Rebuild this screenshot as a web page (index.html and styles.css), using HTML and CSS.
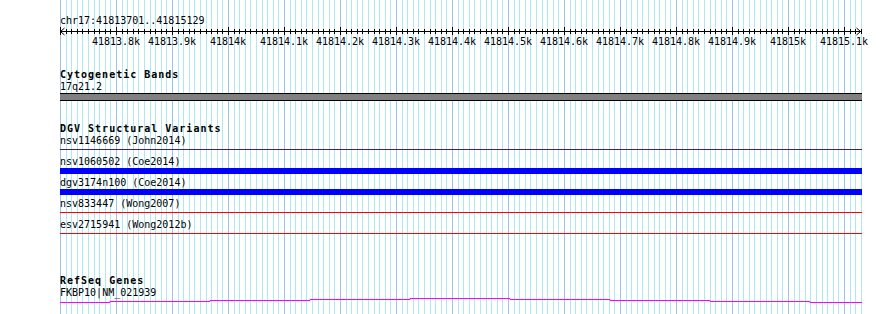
FILE: index.html
```html
<!DOCTYPE html>
<html lang="en">
<head>
<meta charset="utf-8">
<title>Genome browser</title>
<link rel="stylesheet" href="styles.css">
</head>
<body>
<div class="browser">
  <svg class="grid" id="grid" width="890" height="314" aria-hidden="true"></svg>
  <div class="tracks">
    <div class="ruler">
      <div class="loc">chr17:41813701..41815129</div>
      <svg class="ruler-svg" id="ruler" width="806" height="22"></svg>
    </div>

    <section class="track cyto">
      <h2 class="track-title">Cytogenetic Bands</h2>
      <div class="feat-label">17q21.2</div>
      <div class="band"></div>
    </section>

    <section class="track dgv">
      <h2 class="track-title">DGV Structural Variants</h2>
      <div class="feature">
        <div class="feat-label">nsv1146669 (John2014)</div>
        <div class="glyph"><div class="thin purple"></div></div>
      </div>
      <div class="feature">
        <div class="feat-label">nsv1060502 (Coe2014)</div>
        <div class="glyph solid"><div class="thick blue"></div></div>
      </div>
      <div class="feature">
        <div class="feat-label">dgv3174n100 (Coe2014)</div>
        <div class="glyph solid"><div class="thick blue"></div></div>
      </div>
      <div class="feature">
        <div class="feat-label">nsv833447 (Wong2007)</div>
        <div class="glyph"><div class="thin red"></div></div>
      </div>
      <div class="feature">
        <div class="feat-label">esv2715941 (Wong2012b)</div>
        <div class="glyph"><div class="thin red"></div></div>
      </div>
    </section>

    <section class="track refseq">
      <h2 class="track-title">RefSeq Genes</h2>
      <div class="feat-label">FKBP10|NM_021939</div>
      <svg class="gene" width="802" height="8" aria-hidden="true">
        <polyline points="0,5.5 50,5.5 50,4.5 150,4.5 150,3.5 250,3.5 250,2.5 350,2.5 350,1.5 450,1.5 450,2.5 550,2.5 550,3.5 650,3.5 650,4.5 750,4.5 750,5.5 802,5.5"/>
      </svg>
    </section>
  </div>
</div>
<script src="script.js"></script>
</body>
</html>
```

FILE: styles.css
```css
* { box-sizing: border-box; margin: 0; padding: 0; }

body {
  margin: 0;
  background: #ffffff;
  color: #000000;
  font-family: "DejaVu Sans Mono", "Liberation Mono", monospace;
  font-size: 10px;
}

.browser {
  position: relative;
  width: 890px;
  height: 314px;
  overflow: hidden;
}

.grid {
  position: absolute;
  left: 0;
  top: 0;
}
.grid .minor { stroke: #aee9ef; stroke-width: 1; }
.grid .major { stroke: #9cc3e8; stroke-width: 1; }

.tracks {
  position: relative;
  z-index: 1;
  width: 862px;
  padding-left: 60px;
}

.ruler { padding-top: 15px; }
.loc { line-height: 12px; white-space: nowrap; }
.ruler-svg { display: block; overflow: visible; }
.ruler-svg line { stroke: #000; stroke-width: 1; }
.ruler-svg polyline { stroke: #000; stroke-width: 1; fill: none; }
.ruler-svg text {
  font-family: "DejaVu Sans Mono", "Liberation Mono", monospace;
  font-size: 10px;
  fill: #000;
}

.track { display: flex; flex-direction: column; }

.track-title {
  font-size: 10px;
  font-weight: bold;
  letter-spacing: 1px;
  line-height: 12px;
  white-space: nowrap;
}

.feat-label { line-height: 12px; white-space: nowrap; }

.cyto { margin-top: 20px; }
.band {
  height: 8px;
  background: #808080;
  border-top: 1px solid #000;
  border-bottom: 1px solid #000;
}

.dgv { margin-top: 22px; }
.feature { display: flex; flex-direction: column; margin-bottom: 3px; }
.glyph { height: 6px; padding-top: 2px; }
.glyph.solid { padding-top: 0; }
.thin { height: 1px; }
.thick { height: 6px; }
.purple { background: #3f1f6f; }
.blue { background: #0000ff; }
.red { background: #ff0000; }

.refseq { margin-top: 35px; }
.gene { display: block; margin-top: -2px; }
.gene polyline { fill: none; stroke: #ff00ff; stroke-width: 1; }
```

FILE: script.js
```js
(function () {
  var NS = 'http://www.w3.org/2000/svg';
  function el(tag, attrs, parent) {
    var e = document.createElementNS(NS, tag);
    for (var k in attrs) e.setAttribute(k, attrs[k]);
    if (parent) parent.appendChild(e);
    return e;
  }
  var STEP = 5.6, N = 143, LEFT = 60;

  var grid = document.getElementById('grid');
  for (var k = 0; k <= N; k++) {
    var x = LEFT + Math.round(k * STEP) + 0.5;
    el('line', { x1: x, y1: 0, x2: x, y2: 314, 'class': k % 10 === 0 ? 'major' : 'minor' }, grid);
  }

  var ruler = document.getElementById('ruler');
  el('line', { x1: 0, y1: 4.5, x2: 801, y2: 4.5 }, ruler);
  for (var t = 0; t <= N; t++) {
    var tx = Math.round(t * STEP) + 0.5;
    if (t % 10 === 0) el('line', { x1: tx, y1: 0, x2: tx, y2: 8 }, ruler);
    else el('line', { x1: tx, y1: 2, x2: tx, y2: 7 }, ruler);
  }
  el('polyline', { points: '4.5,1 0.5,4.5 4.5,8' }, ruler);
  el('polyline', { points: '796.5,1 800.5,4.5 796.5,8' }, ruler);

  for (var m = 1; m <= 14; m++) {
    var v = 418137 + m;
    var s = (v % 10 === 0) ? String(v / 10) : (v / 10).toFixed(1);
    var label = el('text', { x: m * 56, y: 18, 'text-anchor': 'middle' }, ruler);
    label.textContent = s + 'k';
  }
})();
```
